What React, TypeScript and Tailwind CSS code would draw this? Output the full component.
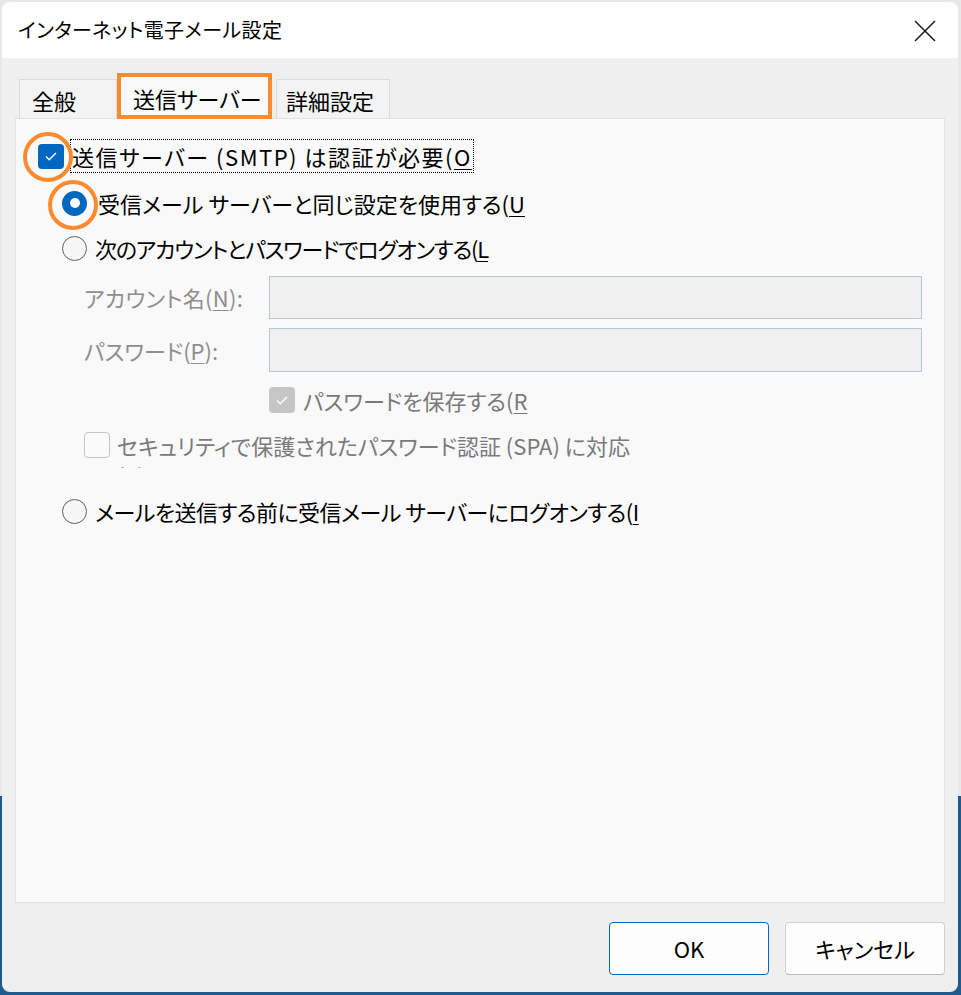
import React from "react";

const orange = "border-[#fb8b2e]";

const Check = ({ color = "white" }: { color?: string }) => (
  <svg width="26" height="26" viewBox="0 0 26 26" fill="none">
    <path d="M8 13.5l3.2 3.2L18 10" stroke={color} strokeWidth="1.4" />
  </svg>
);

const Radio = ({ on = false, mark = false }: { on?: boolean; mark?: boolean }) => (
  <div className="relative shrink-0 w-[25px] h-[25px]">
    {on ? (
      <div className="w-[25px] h-[25px] rounded-full bg-[#0067c0] flex items-center justify-center">
        <div className="w-[10px] h-[10px] rounded-full bg-white" />
      </div>
    ) : (
      <div className="w-[25px] h-[25px] rounded-full border-[1.5px] border-[#606060] bg-[#f7f7f7]" />
    )}
    {mark && (
      <div
        className={`absolute left-[-14px] top-[-11px] w-[50px] h-[50px] rounded-full border-[4px] ${orange} pointer-events-none`}
      />
    )}
  </div>
);

const Key = ({ k }: { k: string }) => <span className="underline underline-offset-[3px] decoration-1">{k}</span>;

const App = () => {
  return (
    <div className="w-[961px] h-[995px] bg-linear-to-b from-[#e8e8e8] from-80% to-[#1d5a8e] to-80% pt-[2px] pl-[2px] pr-[3px] pb-[3px] font-['Noto_Sans_CJK_JP','Noto_Sans_CJK_SC',sans-serif] [font-feature-settings:'palt'] text-black">
      <div className="w-[956px] h-[990px] rounded-[8px] overflow-hidden flex flex-col bg-[#efefef]">
        {/* title bar */}
        <div className="h-[56px] bg-white flex items-center justify-between pl-[16px] pr-[22px]">
          <span className="text-[20px] leading-none tracking-[0.4px]">インターネット電子メール設定</span>
          <svg width="22" height="22" viewBox="0 0 22 22" className="mt-[2px]">
            <path d="M1 1l20 20M21 1L1 21" stroke="#1a1a1a" strokeWidth="1.5" />
          </svg>
        </div>

        {/* body */}
        <div className="flex-1 px-[13px] pt-[14px] flex flex-col">
          <div className="h-[46px] flex items-end pl-[4px]">
            <div className="w-[98px] h-[39px] bg-[#f3f3f3] border border-b-0 border-[#dcdcdc] text-[22px] leading-none pl-[12px] pt-[9px]">
              全般
            </div>
            <div className={`relative z-10 w-[155px] h-[46px] -mb-px bg-[#f9f9f9] border-[4px] ${orange} text-[22px] leading-none pl-[12px] pt-[10px]`}>
              送信サーバー
            </div>
            <div className="ml-[4px] w-[114px] h-[39px] bg-[#f3f3f3] border border-b-0 border-[#dcdcdc] text-[22px] leading-none pl-[9px] pt-[9px]">
              詳細設定
            </div>
          </div>

          <div className="h-[785px] bg-[#f9f9f9] border border-[#e2e2e2] flex flex-col text-[22px]">
            {/* row 1 */}
            <div className="mt-[20px] h-[34px] ml-[22px] flex items-center">
              <div className="relative w-[26px] h-[25px] rounded-[4px] bg-[#0067c0] flex items-center justify-center shrink-0">
                <Check />
                <div className={`absolute left-[-15px] top-[-12px] w-[50px] h-[50px] rounded-full border-[4px] ${orange}`} />
              </div>
              <span className="ml-[6px] h-[34px] border border-dotted border-black px-[1px] flex items-center whitespace-nowrap tracking-[1.5px]">
                送信サーバー (SMTP) は認証が必要(<Key k="O" />
              </span>
            </div>

            {/* row 2 */}
            <div className="mt-[13px] h-[34px] ml-[46px] flex items-center">
              <Radio on mark />
              <span className="ml-[11px] whitespace-nowrap">
                受信メール サーバーと同じ設定を使用する(<Key k="U" />
              </span>
            </div>

            {/* row 3 */}
            <div className="mt-[11px] h-[34px] ml-[46px] flex items-center">
              <Radio />
              <span className="ml-[8px] whitespace-nowrap tracking-[-1.2px]">
                次のアカウントとパスワードでログオンする(<Key k="L" />
              </span>
            </div>

            <div className="mt-[11px] h-[43px] ml-[68px] flex items-center">
              <span className="w-[185px] text-[#8e8e8e] whitespace-nowrap tracking-[0.3px]">
                アカウント名(<Key k="N" />):
              </span>
              <div className="w-[653px] h-[43px] bg-[#f0f0f0] border-[1.5px] border-[#b3c6dc]" />
            </div>

            <div className="mt-[9px] h-[44px] ml-[68px] flex items-center">
              <span className="w-[185px] text-[#8e8e8e] whitespace-nowrap">
                パスワード(<Key k="P" />):
              </span>
              <div className="w-[653px] h-[44px] bg-[#f0f0f0] border-[1.5px] border-[#b3c6dc]" />
            </div>

            <div className="mt-[13px] h-[30px] ml-[253px] flex items-center">
              <div className="w-[26px] h-[26px] rounded-[4px] bg-[#c6c6c6] flex items-center justify-center shrink-0">
                <Check />
              </div>
              <span className="ml-[8px] text-[#7a7a7a] whitespace-nowrap">
                パスワードを保存する(<Key k="R" />
              </span>
            </div>

            <div className="mt-[15px] h-[38px] ml-[68px] flex items-start overflow-hidden">
              <div className="mt-[2px] w-[26px] h-[26px] rounded-[4px] border border-[#c4c4c4] bg-[#fbfbfb] shrink-0" />
              <span className="ml-[7px] w-[560px] text-[#7a7a7a] leading-[30px]">
                セキュリティで保護されたパスワード認証 (SPA) に対応
                <br />
                (<Key k="S" />)
              </span>
            </div>

            <div className="mt-[26px] h-[34px] ml-[46px] flex items-center">
              <Radio />
              <span className="ml-[8px] whitespace-nowrap tracking-[-0.55px]">
                メールを送信する前に受信メール サーバーにログオンする(<Key k="I" />
              </span>
            </div>
          </div>

          <div className="mt-[19px] h-[53px] flex justify-end gap-[16px]">
            <button className="w-[160px] h-[53px] rounded-[4px] border border-[#0067c0] bg-[#fdfdfd] text-[22px]">OK</button>
            <button className="w-[160px] h-[53px] rounded-[4px] border border-[#d0d0d0] border-b-[#bcbcbc] bg-[#fdfdfd] text-[22px]">
              キャンセル
            </button>
          </div>
        </div>
      </div>
    </div>
  );
};

export default App;
